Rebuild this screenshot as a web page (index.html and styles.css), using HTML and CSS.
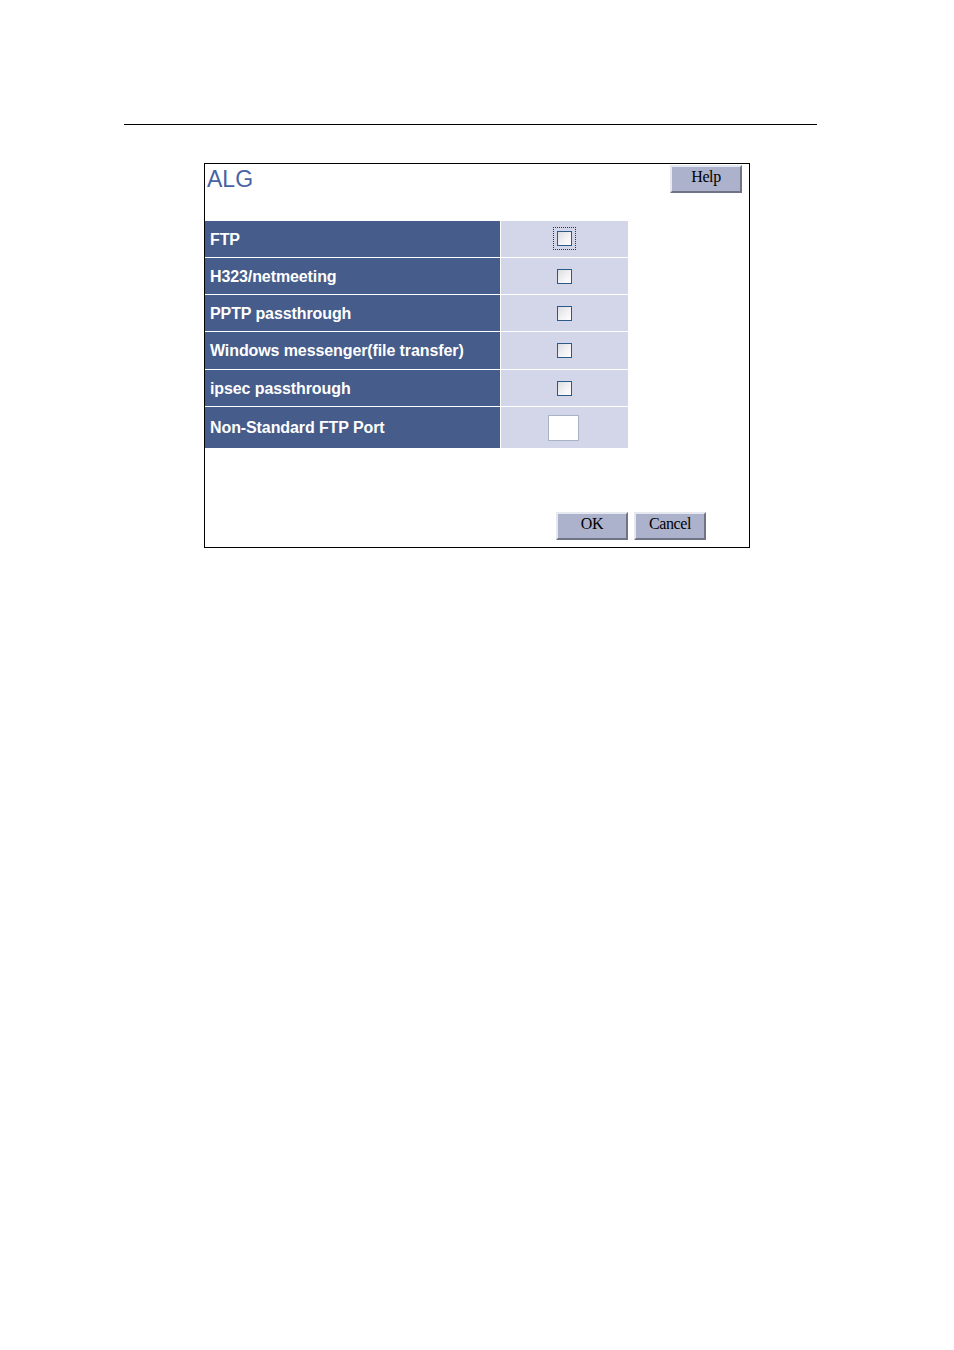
FILE: index.html
```html
<!DOCTYPE html>
<html>
<head>
<meta charset="utf-8">
<link rel="stylesheet" href="styles.css">
</head>
<body>
<div class="page">
  <div class="rule"></div>
  <div class="panel">
    <div class="head">
      <div class="title">ALG</div>
      <button class="btn help">Help</button>
    </div>
    <div class="table">
      <div class="row"><div class="label">FTP</div><div class="val"><span class="focus"><input type="checkbox" class="cb"></span></div></div>
      <div class="row"><div class="label">H323/netmeeting</div><div class="val"><input type="checkbox" class="cb"></div></div>
      <div class="row"><div class="label">PPTP passthrough</div><div class="val"><input type="checkbox" class="cb"></div></div>
      <div class="row wide"><div class="label">Windows messenger(file transfer)</div><div class="val"><input type="checkbox" class="cb"></div></div>
      <div class="row"><div class="label">ipsec passthrough</div><div class="val"><input type="checkbox" class="cb"></div></div>
      <div class="row tall"><div class="label">Non-Standard FTP Port</div><div class="val"><input type="text" class="port"></div></div>
    </div>
    <div class="foot">
      <button class="btn">OK</button>
      <button class="btn">Cancel</button>
    </div>
  </div>
</div>
</body>
</html>
```

FILE: styles.css
```css
html, body {
  margin: 0;
  padding: 0;
  background: #ffffff;
}
.page {
  padding-top: 124px;
}
.rule {
  margin-left: 124px;
  width: 693px;
  height: 1px;
  background: #000;
}
.panel {
  margin-top: 38px;
  margin-left: 204px;
  width: 544px;
  height: 383px;
  border: 1px solid #000;
  display: flex;
  flex-direction: column;
}
.head {
  height: 57px;
  display: flex;
  justify-content: space-between;
  align-items: flex-start;
}
.title {
  font-family: "Liberation Sans", Arial, sans-serif;
  font-size: 23px;
  color: #4862a3;
  margin-left: 2px;
  margin-top: 2px;
  line-height: 26px;
}
.btn {
  font-family: "Liberation Serif", "Times New Roman", serif;
  font-size: 16px;
  color: #000;
  width: 72px;
  height: 28px;
  padding: 0 0 5px 0;
  background: #adb2cc;
  border: 2px solid;
  border-color: #e6e8f0 #6f7384 #6f7384 #e6e8f0;
  letter-spacing: -0.4px;
}
.help {
  margin-top: 1px;
  margin-right: 7px;
}
.table {
  width: 423px;
  display: flex;
  flex-direction: column;
  gap: 1px;
}
.row {
  display: flex;
  height: 36px;
  gap: 1px;
}
.row.wide {
  height: 37px;
}
.row.tall {
  height: 41px;
}
.label {
  width: 290px;
  padding-left: 5px;
  padding-top: 1px;
  background: #465c8a;
  color: #fff;
  font-family: "Liberation Sans", Arial, sans-serif;
  font-weight: bold;
  font-size: 16px;
  display: flex;
  align-items: center;
  letter-spacing: -0.1px;
  box-sizing: border-box;
  width: 295px;
}
.val {
  flex: 1;
  background: #d2d6e8;
  display: flex;
  align-items: center;
  justify-content: center;
  padding-right: 1px;
}
.cb {
  appearance: none;
  -webkit-appearance: none;
  width: 15px;
  height: 15px;
  margin: 0;
  border: 1px solid #2a5a8a;
  background: linear-gradient(135deg, #dcdde2 0%, #f4f4f6 60%, #ffffff 100%);
  box-sizing: border-box;
}
.focus {
  display: inline-flex;
  padding: 3px;
  border: 1px dotted #333;
  margin-top: -1px;
}
.port {
  width: 31px;
  height: 26px;
  box-sizing: border-box;
  margin: 0 0 0 -1px;
  border: 1px solid #a9b3c6;
  background: #fff;
  padding: 0;
}
.foot {
  margin-top: auto;
  margin-bottom: 7px;
  margin-right: 43px;
  display: flex;
  justify-content: flex-end;
  gap: 6px;
}
```
